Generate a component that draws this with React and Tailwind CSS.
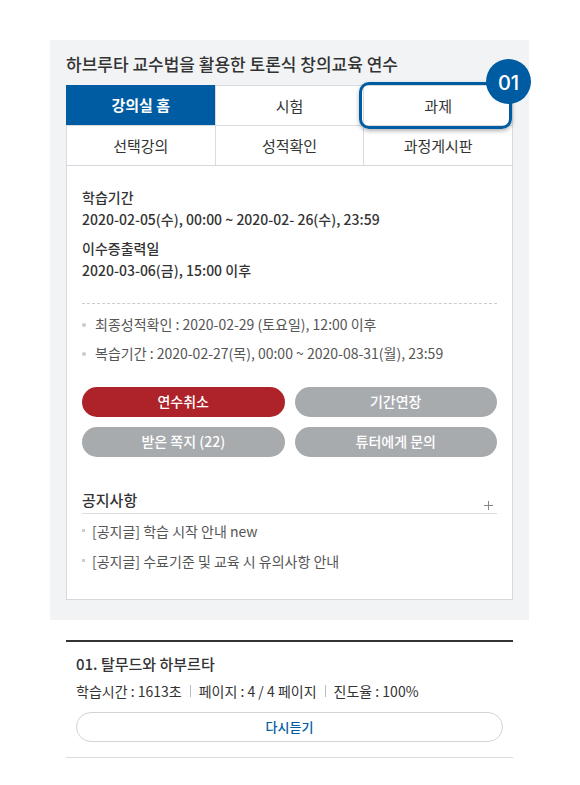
const tabs = ['강의실 홈', '시험', '과제', '선택강의', '성적확인', '과정게시판'];

const actions = ['연수취소', '기간연장', '받은 쪽지 (22)', '튜터에게 문의'];

const schedule = [
  '최종성적확인 : 2020-02-29 (토요일), 12:00 이후',
  '복습기간 : 2020-02-27(목), 00:00 ~ 2020-08-31(월), 23:59',
];

const notices = ['[공지글] 학습 시작 안내 new', '[공지글] 수료기준 및 교육 시 유의사항 안내'];

function Tab({ label }) {
  const active = label === '강의실 홈';
  const marked = label === '과제';
  return (
    <a
      href="#"
      aria-current={active ? 'page' : undefined}
      className={
        'flex h-10 items-center justify-center border-t border-l ' +
        (marked ? 'relative z-10 ' : '') +
        (active
          ? 'border-[#005ca2] bg-[#005ca2] font-bold text-white'
          : 'border-[#d9dbdf] bg-white pt-px text-[#333]')
      }
    >
      {label}
      {marked && (
        <>
          <span className="absolute -top-1 right-0 -bottom-1 -left-[5px] rounded-[10px] border-3 border-[#005ca2] shadow-[0_2px_4px_rgba(0,0,0,0.3)]" />
          <span className="absolute -top-[27px] -right-[19px] flex size-[45px] items-center justify-center rounded-full bg-[#005ca2] pt-[2px] font-['Inter',sans-serif] text-[20px] font-medium text-white">
            01
          </span>
        </>
      )}
    </a>
  );
}

function Divider() {
  return <span className="h-3 w-px bg-[#bbb]" />;
}

export default function App() {
  return (
    <main className="bg-white py-10 pr-[51px] pl-[50px] font-['Noto_Sans_CJK_KR','Noto_Sans',sans-serif] text-[#333]">
      <section className="bg-[#f2f3f5] px-4 pb-5">
        <h1 className="flex h-[45px] items-center pt-[2px] text-[17px] font-medium">
          하브루타 교수법을 활용한 토론식 창의교육 연수
        </h1>
        <nav className="grid grid-cols-3 border-r border-[#d9dbdf] text-[15px]">
          {tabs.map((label) => (
            <Tab key={label} label={label} />
          ))}
        </nav>
        <div className="border border-[#d5d8dd] bg-white px-[15px] pt-5 pb-[23px]">
          <dl className="text-[14px] leading-[22px] font-medium">
            <dt>학습기간</dt>
            <dd>2020-02-05(수), 00:00 ~ 2020-02- 26(수), 23:59</dd>
            <dt className="mt-[7px]">이수증출력일</dt>
            <dd>2020-03-06(금), 15:00 이후</dd>
          </dl>
          <ul className="mt-[22px] border-t border-dashed border-[#ccc] pt-[6px] text-[14px] leading-[29px] text-[#555]">
            {schedule.map((item) => (
              <li key={item} className="flex items-center gap-[9px]">
                <span className="size-1 rounded-full bg-[#ccc]" />
                {item}
              </li>
            ))}
          </ul>
          <div className="mt-[19px] grid grid-cols-2 gap-[10px]">
            {actions.map((label) => (
              <button
                key={label}
                type="button"
                className={
                  'h-[30px] rounded-full pb-[2px] text-[14px] leading-[28px] font-medium text-white ' +
                  (label === '연수취소' ? 'bg-[#ae2329]' : 'bg-[#a7abae]')
                }
              >
                {label}
              </button>
            ))}
          </div>
          <div className="mt-[30px] flex h-[27px] items-center justify-between border-b border-[#d9dbdf]">
            <h2 className="text-[15px] font-medium">공지사항</h2>
            <button type="button" aria-label="더보기" className="mt-[10px] mr-1 text-[#888]">
              <svg viewBox="0 0 9 9" className="size-[9px]" fill="none" stroke="currentColor">
                <path d="M4.5 0v9M0 4.5h9" />
              </svg>
            </button>
          </div>
          <ul className="mt-[2px] text-[14px] leading-[30px] text-[#555]">
            {notices.map((item) => (
              <li key={item} className="flex items-center gap-[7px]">
                <span className="mb-[2px] size-[3px] bg-[#ccc]" />
                <a href="#">{item}</a>
              </li>
            ))}
          </ul>
        </div>
      </section>
      <section className="mx-4 mt-5 border-t-2 border-b border-t-[#333] border-b-[#d9dbdf] px-[10px] pt-2 pb-[15px]">
        <h2 className="text-[15px] leading-[28px] font-medium">01. 탈무드와 하부르타</h2>
        <p className="flex items-center gap-2 text-[14px] leading-[26px]">
          <span>학습시간 : 1613초</span>
          <Divider />
          <span>페이지 : 4 / 4 페이지</span>
          <Divider />
          <span>진도율 : 100%</span>
        </p>
        <button
          type="button"
          className="mt-2 block h-[30px] w-full rounded-full border border-[#d0d3d8] text-[13px] leading-[28px] font-medium text-[#005ca2]"
        >
          다시듣기
        </button>
      </section>
    </main>
  );
}
